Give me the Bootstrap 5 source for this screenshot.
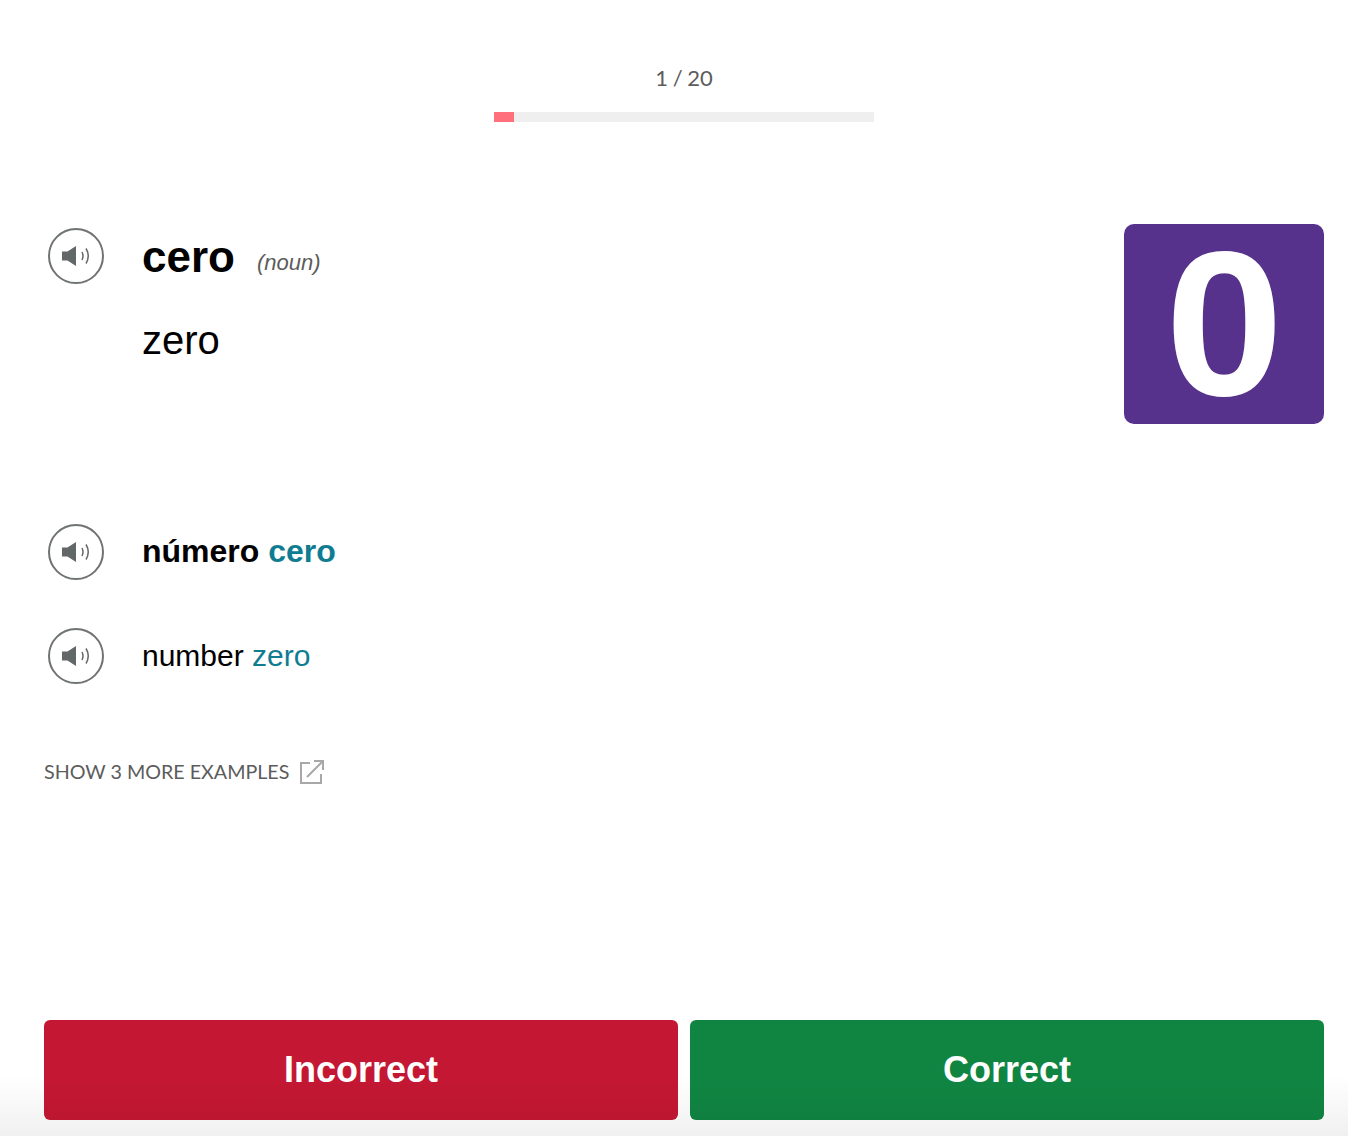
<!DOCTYPE html>
<html lang="en">
<head>
    <meta charset="UTF-8">
    <meta name="viewport" content="width=device-width, initial-scale=1.0">
    <title>Flashcards</title>
    <link rel="stylesheet" href="https://cdn.jsdelivr.net/npm/bootstrap@5.3.0/dist/css/bootstrap.min.css">
    <style>
        body {
            background: #fff;
            font-family: "Liberation Sans", Arial, sans-serif;
            color: #000;
        }
        .page-wrap {
            height: 1136px;
            padding: 0 24px 16px 44px;
            overflow: hidden;
        }
        .counter {
            padding-top: 66px;
            font-family: Lato, sans-serif;
            font-size: 22px;
            line-height: 24px;
            word-spacing: -1px;
            color: #5c5c5c;
        }
        .track {
            width: 380px;
            height: 10px;
            margin: 22px auto 0;
            background: #efefef;
        }
        .track-fill {
            height: 10px;
            background: #ff6f7c;
        }
        .word-row {
            margin-top: 102px;
            height: 200px;
        }
        .sound-btn {
            width: 56px;
            height: 56px;
            margin: 0 38px 0 4px;
            flex: none;
            border: 2px solid #707373;
            border-radius: 50%;
            background: #fff;
            padding: 0;
        }
        .sound-btn svg {
            display: block;
            margin: auto;
        }
        .word-row .sound-btn {
            margin-top: 4px;
        }
        .headword {
            font-size: 44px;
            line-height: 48px;
            font-weight: 700;
            margin: 9px 0 0;
        }
        .pos {
            font-size: 22px;
            font-weight: 400;
            font-style: italic;
            color: #5c5c5c;
            margin-left: 22px;
            vertical-align: 2px;
        }
        .translation {
            font-size: 40px;
            line-height: 44px;
            margin-top: 31px;
        }
        .num-tile {
            width: 200px;
            height: 200px;
            background: #56328c;
            border-radius: 10px;
            color: #fff;
            font-size: 206px;
            font-weight: 700;
            line-height: 200px;
            text-align: center;
        }
        .num-glyph {
            display: inline-block;
            transform: scaleX(1.03);
        }
        .example-es {
            font-size: 32px;
            font-weight: 700;
            padding-bottom: 2px;
        }
        .example-en {
            font-size: 30px;
            padding-bottom: 2px;
        }
        .hl {
            color: #107c91;
        }
        .first-example {
            margin-top: 100px;
        }
        .second-example {
            margin-top: 48px;
        }
        .more-link {
            margin-top: 74px;
            font-family: Lato, sans-serif;
            font-size: 19.700px;
            line-height: 28px;
            color: #5c5c5c;
            text-decoration: none;
        }
        .more-icon {
            margin-left: 3px;
        }
        .answer-row {
            margin-top: 234px;
            gap: 12px;
        }
        .answer-btn {
            width: 634px;
            height: 100px;
            border: 0;
            border-radius: 6px;
            color: #fff;
            font-family: "Liberation Sans", Arial, sans-serif;
            font-size: 36px;
            font-weight: 700;
        }
        .answer-btn:hover {
            color: #fff;
        }
        .btn-wrong, .btn-wrong:hover {
            background: #c41733;
        }
        .btn-right, .btn-right:hover {
            background: #108542;
        }
        .bottom-fade {
            left: 0;
            right: 0;
            bottom: 0;
            height: 60px;
            background: linear-gradient(rgba(0, 0, 0, 0), rgba(0, 0, 0, .06));
            pointer-events: none;
        }
    </style>
</head>
<body>
    <div class="page-wrap position-relative d-flex flex-column">
        <div class="counter text-center">1 / 20</div>
        <div class="track"><div class="track-fill" style="width: 20px"></div></div>

        <div class="word-row d-flex justify-content-between">
            <div class="d-flex align-items-start">
                <button class="sound-btn d-flex align-items-center" type="button" aria-label="Play">
                    <svg width="30" height="20" viewBox="0 0 30 20"><path d="M1 5.500h5.500L15 0v20L6.500 14.500H1z" fill="#636767"/><path d="M21 6q2 4 0 8M25 2.500q4.500 7.500 0 15" fill="none" stroke="#636767" stroke-width="1.500"/></svg>
                </button>
                <div>
                    <div class="headword">cero<span class="pos">(noun)</span></div>
                    <div class="translation">zero</div>
                </div>
            </div>
            <div class="num-tile"><span class="num-glyph">0</span></div>
        </div>

        <div class="first-example d-flex align-items-center">
            <button class="sound-btn d-flex align-items-center" type="button" aria-label="Play">
                <svg width="30" height="20" viewBox="0 0 30 20"><path d="M1 5.500h5.500L15 0v20L6.500 14.500H1z" fill="#636767"/><path d="M21 6q2 4 0 8M25 2.500q4.500 7.500 0 15" fill="none" stroke="#636767" stroke-width="1.500"/></svg>
            </button>
            <div class="example-es">número <span class="hl">cero</span></div>
        </div>
        <div class="second-example d-flex align-items-center">
            <button class="sound-btn d-flex align-items-center" type="button" aria-label="Play">
                <svg width="30" height="20" viewBox="0 0 30 20"><path d="M1 5.500h5.500L15 0v20L6.500 14.500H1z" fill="#636767"/><path d="M21 6q2 4 0 8M25 2.500q4.500 7.500 0 15" fill="none" stroke="#636767" stroke-width="1.500"/></svg>
            </button>
            <div class="example-en">number <span class="hl">zero</span></div>
        </div>

        <a class="more-link d-flex align-items-center gap-2" href="#">
            SHOW 3 MORE EXAMPLES
            <svg class="more-icon" width="24" height="24" viewBox="0 0 24 24" fill="none" stroke="#a8a8a8" stroke-width="2"><path d="M10 3H1v20h20v-9M7 17 22 2M14 1h9v9"/></svg>
        </a>

        <div class="answer-row d-flex justify-content-between">
            <button class="btn answer-btn btn-wrong" type="button">Incorrect</button>
            <button class="btn answer-btn btn-right" type="button">Correct</button>
        </div>
        <div class="bottom-fade position-absolute"></div>
    </div>
    <script src="https://cdn.jsdelivr.net/npm/bootstrap@5.3.0/dist/js/bootstrap.bundle.min.js"></script>
</body>
</html>
